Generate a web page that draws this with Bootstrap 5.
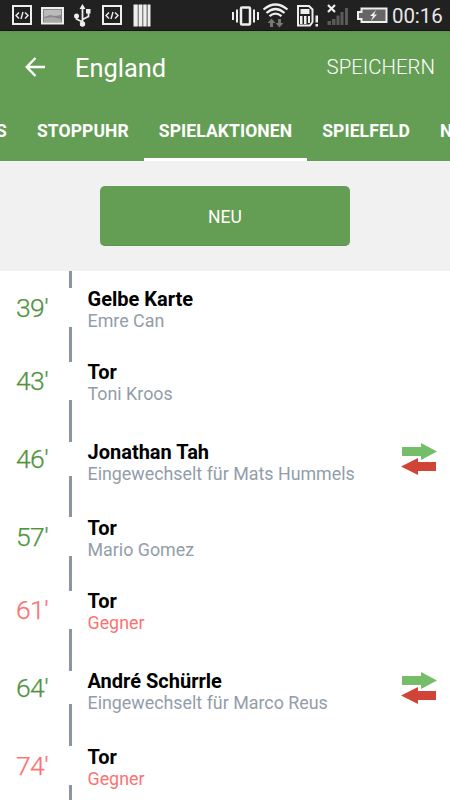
<!DOCTYPE html>
<html lang="de">
<head>
<meta charset="utf-8">
<meta name="viewport" content="width=device-width, initial-scale=1">
<title>England</title>
<link href="https://cdn.jsdelivr.net/npm/bootstrap@5.3.0/dist/css/bootstrap.min.css" rel="stylesheet">
<style>
body{font-family:Roboto,"Liberation Sans",sans-serif;background:#fff;width:450px;height:800px;overflow:hidden}
.statusbar{height:31px;background:#212121;border-bottom:1px solid #1a1020}
.statusbar svg{display:block}
.clock{font-size:20.5px;line-height:32px;color:#e8e8e8;width:51px;margin-left:1px;letter-spacing:-.1px}
.green{background:#649e54}
.appbar{height:73px;color:#fff;padding:0 15px 0 25px;background:linear-gradient(#5f984f,#649e54 6px)}
.appbar svg{margin-bottom:2px}
.apptitle{font-size:25.4px;line-height:73px;margin-left:29px;padding-top:1px}
.save{font-size:20.4px;font-weight:300;line-height:72px;margin-top:-2px}
.tabs{height:57px;overflow:hidden;margin-left:-19px}
.tab-item{font-size:17.5px;font-weight:700;color:#fff;line-height:54px;height:57px;padding:0 15px;border-bottom:3px solid transparent;letter-spacing:.1px}
.tab-item.current{border-color:#fff}
.newarea{height:110px;background:#f1f1f1}
.btn-new{width:250px;height:60px;border-radius:5px;color:#fff;background:#649e54;border:0;border-bottom:1px solid #5b944b;font-size:17.5px;padding-top:5px}
.event{height:73.33px;--gap:38.33px}
.event.sub{height:82.33px;--gap:33.33px}
.minute{width:68.5px;padding-left:16px;font-size:26.5px;font-weight:300;color:#509440;line-height:30px;letter-spacing:-.6px;-webkit-text-stroke:.25px currentColor;padding-top:1px}
.rail{width:3px}
.rail i{width:3px;height:calc((100% - var(--gap)) / 2);background:#8b95a1}
.info{margin-left:16px;padding-top:4px}
.sub .info{padding-top:7px}
.what{font-size:20px;font-weight:700;line-height:22px;color:#000;margin-top:1px}
.who{font-size:17.85px;line-height:22px;color:#929daa}
.opp .minute,.opp .who{color:#fb7272}
.swap{margin-right:12px}
</style>
</head>
<body>
<header>
<div class="statusbar d-flex">
<svg width="391" height="30" viewBox="0 0 391 30">
<g id="code" fill="none" stroke="#eee"><rect x="13" y="6" width="18" height="18" stroke-width="2"/><path d="M19 12.500l-3 3 3 3M25 12.500l3 3-3 3M23 12l-2 7" stroke-width="1.400"/></g>
<rect x="42" y="8" width="21" height="15.500" fill="#888" stroke="#eee" stroke-width="2"/><path d="M44 10h17v5l-6 1-5-1-6 2z" fill="#bbb"/><path d="M44 18l8-1 9 2v3H44z" fill="#aaa"/>
<g fill="none" stroke="#eee" stroke-width="1.800"><path d="M82.500 7v17M82.500 22l-6-3v-3M82.500 19.500l6-3v-4"/></g><path d="M82.500 4l3 5h-6zM86 9h4.500v4.500H86z" fill="#eee"/><circle cx="76.500" cy="16" r="2.500" fill="#eee"/><circle cx="82.500" cy="24" r="2.700" fill="#eee"/>
<use href="#code" x="90"/>
<path d="M133.500 4.500h4.300v22h-4.300zM138.500 4.500h4v22h-4zM143.200 4.500h3.500v22h-3.500zM147.500 4.500h3v22h-3z" fill="#eee"/>
<rect x="241" y="7.500" width="9" height="17" rx="1" fill="none" stroke="#eee" stroke-width="2.500"/><path d="M237 9.500v13M254 9.500v13M233 12v8M258 12v8" stroke="#eee" stroke-width="2"/>
<g fill="none" stroke="#eee" stroke-width="2.200"><path d="M263.500 9.500q12-10 24 0M266.500 13q9-8 18 0M269.500 16.200q6-5 12 0"/></g>
<path d="M271.500 18.500l4 4.500h-2.500v4h-3v-4h-2.500l4-4.500zM279.500 27.500l-4-4.500h2.500v-4h3v4h2.500z" fill="#777"/>
<path d="M298 6h11l3.500 3.500V22l-2.500 3.500h-12z" fill="none" stroke="#eee" stroke-width="2"/><path d="M300.500 9h9v5h-9zM300 16h2.500v8H300zM304 16h2.500v8H304zM308 16h2v7h-2zM315.500 15.500h2.500v7h-2.500zM315.500 24h2.500v2.500h-2.500z" fill="#eee"/>
<path d="M328 5l7 7M335 5l-7 7" stroke="#eee" stroke-width="2.200"/>
<path d="M327.500 21h3.500v4h-3.500zM332 19h3.500v6H332zM336.500 15.500h3v9.500h-3zM340.500 12h3v13h-3zM345 8h3v17h-3z" fill="#5a5a5a"/>
<path d="M361.500 8.500h25V22h-25v-3h-3.500v-7h3.500z" fill="#666" stroke="#eee" stroke-width="2"/><path d="M376 10l-6 6h3l-2 5 6-6.500h-3z" fill="#eee"/>
</svg>
<div class="clock text-nowrap">00:16</div>
</div>
<div class="appbar d-flex align-items-center">
<svg width="21" height="20" viewBox="0 0 21 20" fill="none" stroke="#fff" stroke-width="2.400"><path d="M20 10H2M10.500 1L1.700 10l8.800 9"/></svg>
<span class="apptitle">England</span>
<span class="save ms-auto">SPEICHERN</span>
</div>
<nav class="green"><div class="tabs d-flex text-nowrap">
<span class="tab-item">S</span><span class="tab-item">STOPPUHR</span><span class="tab-item current">SPIELAKTIONEN</span><span class="tab-item">SPIELFELD</span><span class="tab-item">N</span>
</div></nav>
</header>
<main>
<section class="newarea d-flex justify-content-center align-items-center"><button class="btn-new" type="button">NEU</button></section>
<section>
<div class="event d-flex align-items-center"><div class="minute">39'</div><div class="rail h-100 d-flex flex-column justify-content-between"><i></i><i></i></div><div class="info"><div class="what">Gelbe Karte</div><div class="who">Emre Can</div></div></div>
<div class="event d-flex align-items-center"><div class="minute">43'</div><div class="rail h-100 d-flex flex-column justify-content-between"><i></i><i></i></div><div class="info"><div class="what">Tor</div><div class="who">Toni Kroos</div></div></div>
<div class="event sub d-flex align-items-center"><div class="minute">46'</div><div class="rail h-100 d-flex flex-column justify-content-between"><i></i><i></i></div><div class="info"><div class="what">Jonathan Tah</div><div class="who">Eingewechselt für Mats Hummels</div></div>
<svg class="swap ms-auto" width="37" height="34" viewBox="0 0 37 34"><path d="M1 5h19V1l16 8.500L20 18v-4H1z" fill="#76bd69"/><path d="M35 20H17v-4L0 24.500 17 33v-4h18z" fill="#d04437"/></svg></div>
<div class="event d-flex align-items-center"><div class="minute">57'</div><div class="rail h-100 d-flex flex-column justify-content-between"><i></i><i></i></div><div class="info"><div class="what">Tor</div><div class="who">Mario Gomez</div></div></div>
<div class="event opp d-flex align-items-center"><div class="minute">61'</div><div class="rail h-100 d-flex flex-column justify-content-between"><i></i><i></i></div><div class="info"><div class="what">Tor</div><div class="who">Gegner</div></div></div>
<div class="event sub d-flex align-items-center"><div class="minute">64'</div><div class="rail h-100 d-flex flex-column justify-content-between"><i></i><i></i></div><div class="info"><div class="what">André Schürrle</div><div class="who">Eingewechselt für Marco Reus</div></div>
<svg class="swap ms-auto" width="37" height="34" viewBox="0 0 37 34"><path d="M1 5h19V1l16 8.500L20 18v-4H1z" fill="#76bd69"/><path d="M35 20H17v-4L0 24.500 17 33v-4h18z" fill="#d04437"/></svg></div>
<div class="event opp d-flex align-items-center"><div class="minute">74'</div><div class="rail h-100 d-flex flex-column justify-content-between"><i></i><i></i></div><div class="info"><div class="what">Tor</div><div class="who">Gegner</div></div></div>
</section>
</main>
<script src="https://cdn.jsdelivr.net/npm/bootstrap@5.3.0/dist/js/bootstrap.bundle.min.js"></script>
</body>
</html>
